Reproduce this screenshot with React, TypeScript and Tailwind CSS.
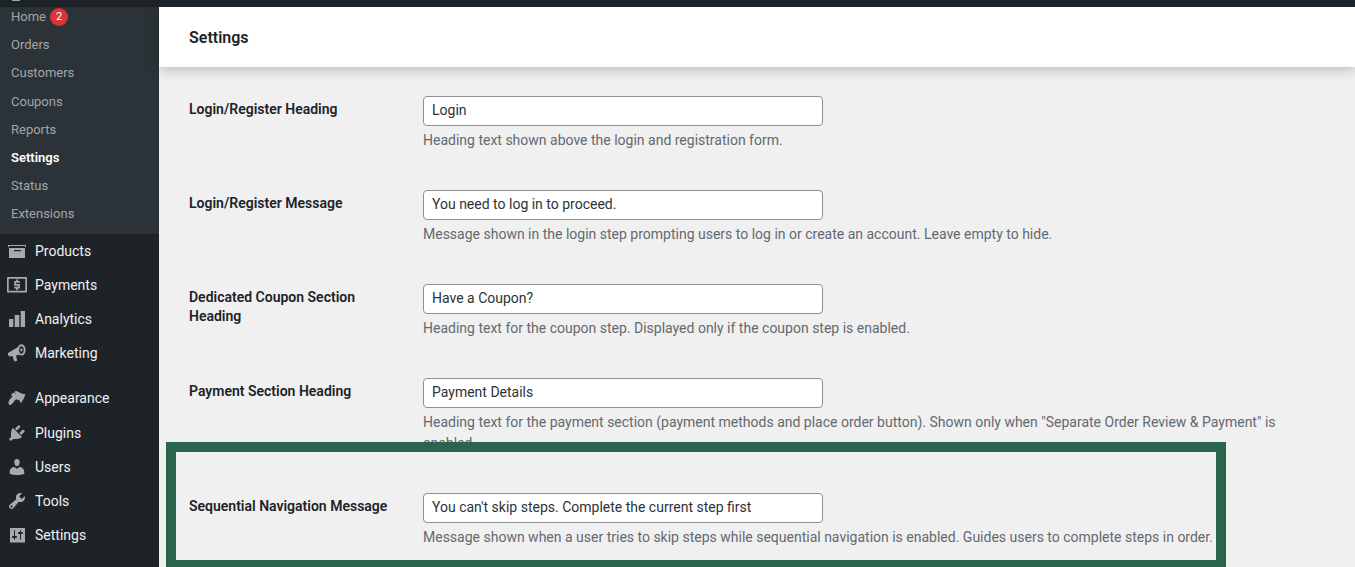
import React from "react";

const paths: Record<string, React.ReactNode> = {
  products: (
    <>
      <path d="M1 4h18v2h-1V5.100H2V6H1z" />
      <path fillRule="evenodd" d="M2 7h16v10H2zM7 9v1.200h7V9z" />
    </>
  ),
  payments: (
    <>
      <path
        fillRule="evenodd"
        d="M0 3c0-.6.4-1 1-1h18c.6 0 1 .4 1 1v13.500c0 .6-.4 1-1 1H1c-.6 0-1-.4-1-1zm1.700.7v12.100h16.600V3.700z"
      />
      <path
        fill="none"
        stroke="#a7aaad"
        strokeWidth="1.800"
        d="M12.800 6.900H8.100v2.900h3.900v2.900H7.200M10 4.600v1.800M10 13v2"
      />
    </>
  ),
  analytics: <path d="M2 10h4.300v8H2zM7.700 6h4.600v12H7.700zM13.700 2H18v16h-4.300z" />,
  marketing: (
    <path
      fillRule="evenodd"
      d="M1 10l10-6c.6-1.700 1.800-2.700 3.400-2.700 2.400 0 4.200 2.500 4.200 5.700 0 3.100-1.800 5.600-4.200 5.600-.8 0-1.500-.3-2.100-.8l-3.400.6 1.400 5.300-3 .8-1.800-5.500-3.200.4L1 12zM14.400 3.200c-1.300 0-2.300 1.700-2.300 3.800s1 3.800 2.300 3.800 2.400-1.700 2.400-3.800-1.100-3.800-2.400-3.800zm0 2.400c.7 0 1.200.6 1.200 1.400s-.5 1.400-1.200 1.400-1.200-.6-1.200-1.400.5-1.400 1.200-1.400z"
    />
  ),
  appearance: (
    <>
      <path d="M7.500 3.500L9 3c2 .5 3.500 1.500 5 2.300 1.500.7 3 1 4.500 1-1 3-2.500 6-4.500 9z" />
      <path d="M6.800 4.300L4 7l1.500 1.500-1 1C3 11 1 13.500 1.500 15.500c.3 1 1 1.500 1.800 1.500 2-.5 3.500-3.500 5-5l1-1 1.500 1.500 2.700-2.700z" />
    </>
  ),
  plugins: (
    <path d="M13.110 4.360L9.870 7.600 8 5.730l3.240-3.240c.35-.34 1.050-.2 1.560.32.52.51.66 1.210.31 1.550zm-8 1.770l.91-1.120 9.010 9.010-1.190.84c-.71.71-2.630 1.160-3.820 1.160H6.140L4.900 17.260c-.59.59-1.540.59-2.120 0-.59-.58-.59-1.530 0-2.120l1.240-1.240v-3.880c0-1.130.4-3.190 1.090-3.890zm7.260 3.970l3.240-3.240c.34-.35 1.040-.21 1.550.31.52.51.66 1.210.31 1.550l-3.240 3.250z" />
  ),
  users: (
    <path d="M10 9.250c-2.270 0-2.730-3.440-2.730-3.440C7 4.020 7.820 2 9.970 2c2.160 0 2.980 2.020 2.710 3.810 0 0-.41 3.440-2.680 3.440zm0 2.570L12.720 10c2.390 0 4.520 2.330 4.520 4.530v2.490s-3.650 1.130-7.240 1.130c-3.650 0-7.240-1.130-7.240-1.130v-2.490c0-2.250 1.940-4.480 4.470-4.480z" />
  ),
  tools: (
    <path d="M16.680 9.770c-1.340 1.340-3.300 1.670-4.950.99l-5.410 6.520c-.99.99-2.590.99-3.580 0s-.99-2.590 0-3.570l6.520-5.420c-.68-1.650-.35-3.610.99-4.950 1.280-1.280 3.120-1.620 4.720-1.060l-2.890 2.890 2.820 2.820 2.860-2.870c.53 1.580.18 3.390-1.080 4.650zM3.810 16.210c.4.39 1.040.39 1.430 0 .4-.4.4-1.040 0-1.430-.39-.4-1.030-.4-1.430 0-.39.39-.39 1.030 0 1.430z" />
  ),
  settings: (
    <path
      fillRule="evenodd"
      d="M3 3h15v14.500H3zM8 11h1c.55 0 1 .45 1 1s-.45 1-1 1H8v1.500c0 .28-.22.5-.5.5s-.5-.22-.5-.5V13H6c-.55 0-1-.45-1-1s.45-1 1-1h1V5.500c0-.28.22-.5.5-.5s.5.22.5.5V11zm5-2h-1c-.55 0-1-.45-1-1s.45-1 1-1h1V5.500c0-.28.22-.5.5-.5s.5.22.5.5V7h1c.55 0 1 .45 1 1s-.45 1-1 1h-1v5.500c0 .28-.22.5-.5.5s-.5-.22-.5-.5V9z"
    />
  ),
};

function MenuIcon({ name }: { name: string }) {
  return (
    <svg viewBox="0 0 20 20" className="h-5 w-5 fill-[#a7aaad]" aria-hidden="true">
      {paths[name]}
    </svg>
  );
}

function MenuItem({ name, label, extra = "" }: { name: string; label: string; extra?: string }) {
  return (
    <div className={`flex h-[34px] items-center pl-[7px] text-sm text-[#f0f0f1] ${extra}`}>
      <span className="mr-2 flex w-5 justify-center">
        <MenuIcon name={name} />
      </span>
      <span>{label}</span>
    </div>
  );
}

function SubItem({ label, active, badge }: { label: string; active?: boolean; badge?: string }) {
  return (
    <div
      className={`flex h-[28.2px] items-center pl-[11px] text-[13px] ${
        active ? "font-semibold text-white" : "text-[#c3c4c7]/80"
      }`}
    >
      <span>{label}</span>
      {badge && (
        <span className="ml-[4px] mt-[1px] flex h-[18px] w-[18px] items-center justify-center rounded-full bg-[#d63638] text-[11px] text-white">
          {badge}
        </span>
      )}
    </div>
  );
}

function Row({ label, value, desc, height = "h-[94px]" }: { label: string; value: string; desc: string; height?: string }) {
  return (
    <div className={`flex ${height}`}>
      <div className="w-[234px] shrink-0 pr-[30px] pt-[4px] text-sm font-semibold leading-[19px] text-[#1d2327]">
        {label}
      </div>
      <div className="min-w-0 flex-1">
        <input
          readOnly
          value={value}
          className="block h-[30px] w-[400px] rounded-[4px] border border-[#8c8f94] bg-white px-2 pb-[2px] text-sm text-[#2c3338] outline-none"
        />
        <p className="mt-[4px] text-sm leading-[21px] text-[#646970]">{desc}</p>
      </div>
    </div>
  );
}

export default function App() {
  return (
    <div className="relative flex h-[567px] flex-col overflow-hidden bg-[#f0f0f1] font-['Roboto',sans-serif]">
      <div className="relative z-20 h-[7px] shrink-0 overflow-hidden bg-[#1d2327]">
        <div className="ml-[12px] h-[1px] w-[8px] rounded-b bg-[#a7aaad]" />
      </div>
      <div className="flex min-h-0 flex-1">
        <aside className="w-[159px] shrink-0 bg-[#1d2327]">
          <div className="-mt-[4.4px] h-[231.4px] bg-[#2c3338]">
            <SubItem label="Home" badge="2" />
            <SubItem label="Orders" />
            <SubItem label="Customers" />
            <SubItem label="Coupons" />
            <SubItem label="Reports" />
            <SubItem label="Settings" active />
            <SubItem label="Status" />
            <SubItem label="Extensions" />
          </div>
          <MenuItem name="products" label="Products" />
          <MenuItem name="payments" label="Payments" />
          <MenuItem name="analytics" label="Analytics" />
          <MenuItem name="marketing" label="Marketing" extra="mb-[11px]" />
          <MenuItem name="appearance" label="Appearance" extra="mb-px" />
          <MenuItem name="plugins" label="Plugins" />
          <MenuItem name="users" label="Users" />
          <MenuItem name="tools" label="Tools" />
          <MenuItem name="settings" label="Settings" />
        </aside>
        <main className="min-w-0 flex-1">
          <header className="relative z-10 flex h-[60px] items-center bg-white pl-[30px] pt-[1px] text-base font-semibold text-[#1d2327] shadow-[0_2px_12px_rgba(0,0,0,0.25)]">
            Settings
          </header>
          <div className="pl-[30px] pr-[30px] pt-[29px]">
            <Row
              label="Login/Register Heading"
              value="Login"
              desc="Heading text shown above the login and registration form."
            />
            <Row
              label="Login/Register Message"
              value="You need to log in to proceed."
              desc="Message shown in the login step prompting users to log in or create an account. Leave empty to hide."
            />
            <Row
              label="Dedicated Coupon Section Heading"
              value="Have a Coupon?"
              desc="Heading text for the coupon step. Displayed only if the coupon step is enabled."
            />
            <Row
              label="Payment Section Heading"
              value="Payment Details"
              desc={'Heading text for the payment section (payment methods and place order button). Shown only when "Separate Order Review & Payment" is enabled.'}
            />
          </div>
        </main>
      </div>
      <div className="absolute left-[166px] top-[442px] z-30 h-[128px] w-[1060px] border-[10px] border-[#2b644c] bg-[#f0f0f1] pl-[13px] pt-[41px]">
        <Row
          label="Sequential Navigation Message"
          value="You can't skip steps. Complete the current step first"
          desc="Message shown when a user tries to skip steps while sequential navigation is enabled. Guides users to complete steps in order."
          height="h-[60px]"
        />
      </div>
    </div>
  );
}
